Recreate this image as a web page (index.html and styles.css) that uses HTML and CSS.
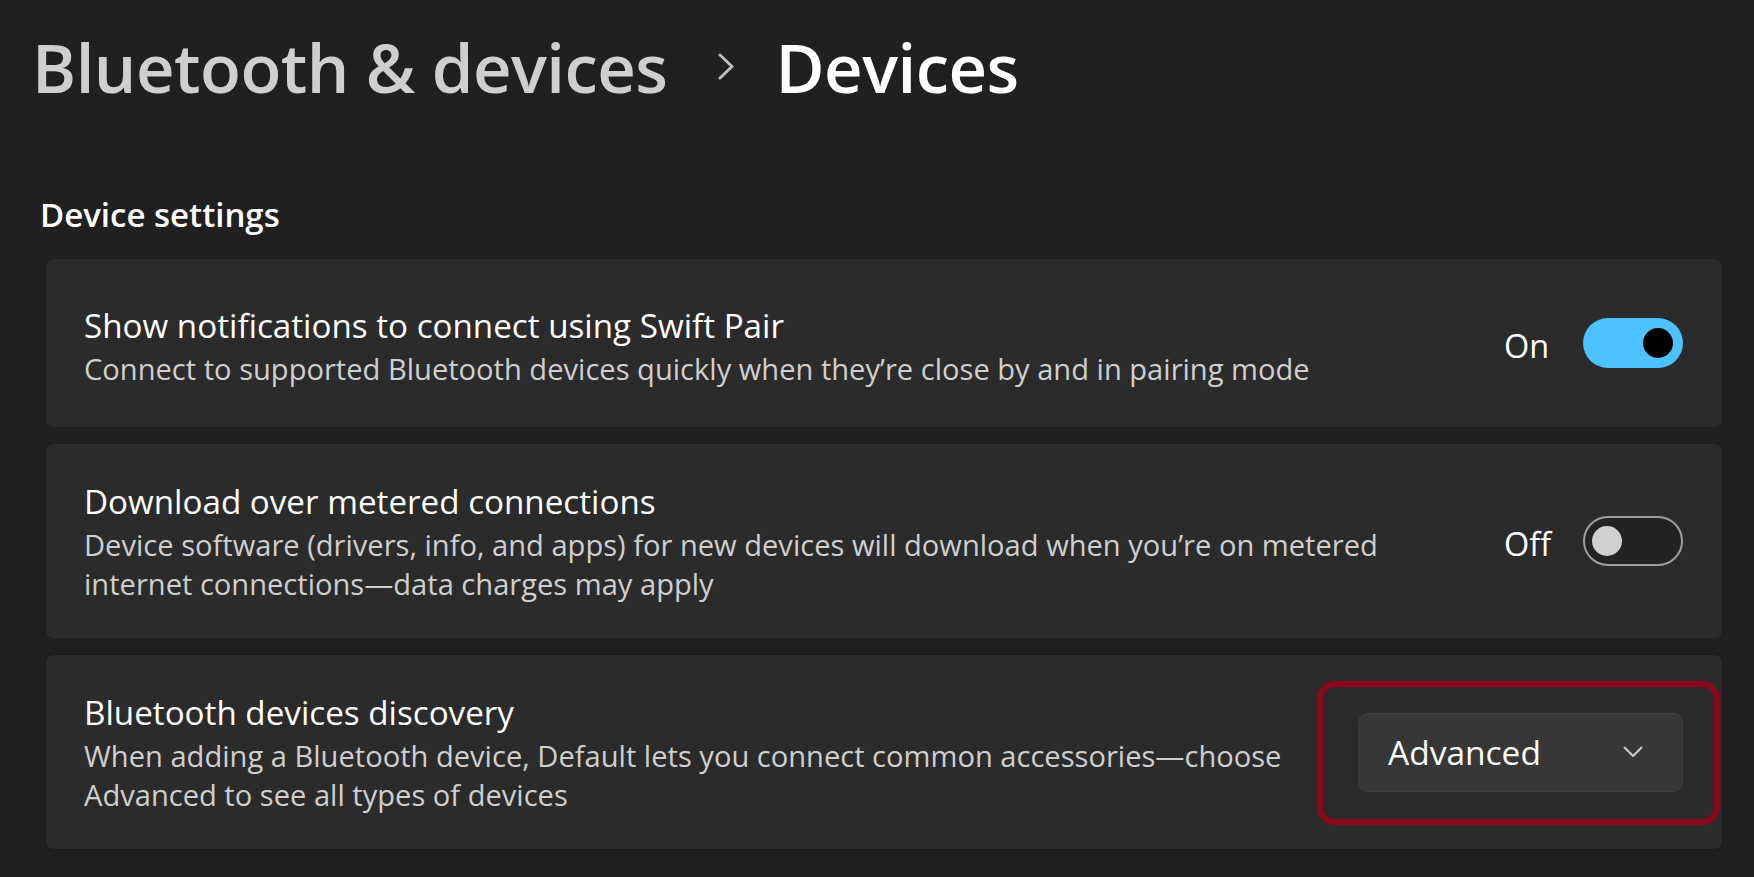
FILE: index.html
```html
<!DOCTYPE html>
<html lang="en">
<head>
<meta charset="utf-8">
<title>Bluetooth &amp; devices - Devices</title>
<link rel="stylesheet" href="styles.css">
</head>
<body>
<div class="page">
  <header class="header">
    <span class="crumb">Bluetooth &amp; devices</span>
    <svg class="crumb-sep" width="16" height="27" viewBox="0 0 16 27" aria-hidden="true"><path d="M2 2 L14 13.5 L2 25" fill="none" stroke="#bdbdbd" stroke-width="3" stroke-linecap="round" stroke-linejoin="round"/></svg>
    <span class="crumb-current">Devices</span>
  </header>

  <h2 class="section-title">Device settings</h2>

  <div class="cards">
    <div class="card card-short">
      <div class="card-text">
        <div class="card-title">Show notifications to connect using Swift Pair</div>
        <div class="card-desc">Connect to supported Bluetooth devices quickly when they’re close by and in pairing mode</div>
      </div>
      <div class="toggle-group">
        <span class="toggle-label">On</span>
        <span class="toggle toggle-on"><span class="knob"></span></span>
      </div>
    </div>

    <div class="card">
      <div class="card-text">
        <div class="card-title">Download over metered connections</div>
        <div class="card-desc">Device software (drivers, info, and apps) for new devices will download when you’re on metered<br>internet connections—data charges may apply</div>
      </div>
      <div class="toggle-group">
        <span class="toggle-label">Off</span>
        <span class="toggle toggle-off"><span class="knob"></span></span>
      </div>
    </div>

    <div class="card">
      <div class="card-text">
        <div class="card-title">Bluetooth devices discovery</div>
        <div class="card-desc">When adding a Bluetooth device, Default lets you connect common accessories—choose<br>Advanced to see all types of devices</div>
      </div>
      <div class="dropdown-wrap">
        <div class="dropdown">
          <span class="dropdown-value">Advanced</span>
          <svg class="dropdown-chev" width="20" height="12" viewBox="0 0 20 12" aria-hidden="true"><path d="M1.5 1.5 L10 10 L18.5 1.5" fill="none" stroke="#cfcfcf" stroke-width="2" stroke-linecap="round" stroke-linejoin="round"/></svg>
        </div>
      </div>
    </div>
  </div>
</div>
</body>
</html>
```

FILE: styles.css
```css
* { box-sizing: border-box; }

html, body {
  margin: 0;
  padding: 0;
}

body {
  background: #202020;
  color: #ffffff;
  font-family: "Open Sans", "Noto Sans", "Liberation Sans", sans-serif;
  width: 1754px;
  height: 877px;
  overflow: hidden;
}

.page {
  padding: 0 31px 0 0;
}

.header {
  display: flex;
  align-items: center;
  padding-left: 32px;
  margin-top: 17px;
  height: 100px;
  font-size: 67px;
  line-height: 100px;
  font-weight: 600;
  letter-spacing: -0.5px;
}

.crumb {
  color: #cfcfcf;
}

.crumb-sep {
  margin: 0 41px 0 51px;
  position: relative;
  top: -1px;
}

.crumb-current {
  color: #ffffff;
}

.section-title {
  margin: 78px 0 0 40px;
  font-size: 33px;
  line-height: 40px;
  font-weight: 600;
  color: #ffffff;
}

.cards {
  margin: 23px 0 0 45px;
  display: flex;
  flex-direction: column;
  gap: 15px;
}

.card {
  display: flex;
  align-items: center;
  background: #2b2b2b;
  border: 1px solid #1d1d1d;
  border-radius: 8px;
  padding: 0 39px 0 38px;
}

.card-text {
  flex: 1;
  min-width: 0;
  padding: 38px 0 34px;
}

.card-short .card-text {
  padding: 47px 0 38px;
}

.card-title {
  font-size: 33.2px;
  line-height: 40px;
  color: #ffffff;
  white-space: nowrap;
}

.card-desc {
  margin-top: 4px;
  font-size: 29.1px;
  line-height: 39px;
  color: #cfcfcf;
  white-space: nowrap;
}

.toggle-group {
  display: flex;
  align-items: center;
}

.toggle-label {
  width: 79px;
  padding-top: 5px;
  font-size: 32.5px;
  line-height: 40px;
  color: #ffffff;
}

.toggle {
  display: flex;
  align-items: center;
  width: 100px;
  height: 50px;
  border-radius: 25px;
}

.toggle .knob {
  width: 30px;
  height: 30px;
  border-radius: 50%;
}

.toggle-on {
  background: #4cc2ff;
  justify-content: flex-end;
  padding-right: 10px;
}

.toggle-on .knob {
  background: #000000;
}

.toggle-off {
  background: #232323;
  border: 2px solid #9e9e9e;
  padding-left: 7px;
}

.toggle-off .knob {
  background: #d0d0d0;
}

.dropdown-wrap {
  position: relative;
}

.dropdown-wrap::after {
  content: "";
  position: absolute;
  top: -32px;
  left: -41px;
  right: -37px;
  bottom: -33px;
  border: 6px solid #870b1d;
  border-radius: 18px;
  box-shadow: 0 0 2px rgba(135, 11, 29, 0.7), inset 0 0 2px rgba(135, 11, 29, 0.7);
  pointer-events: none;
}

.dropdown {
  display: flex;
  align-items: center;
  justify-content: space-between;
  width: 325px;
  height: 79px;
  padding: 0 39px 0 29px;
  background: #373737;
  border: 1px solid #3f3f3f;
  border-top-color: #444444;
  border-radius: 10px;
}

.dropdown-value {
  font-size: 33.5px;
  line-height: 40px;
  color: #ffffff;
}

.dropdown-chev {
  display: block;
}
```
